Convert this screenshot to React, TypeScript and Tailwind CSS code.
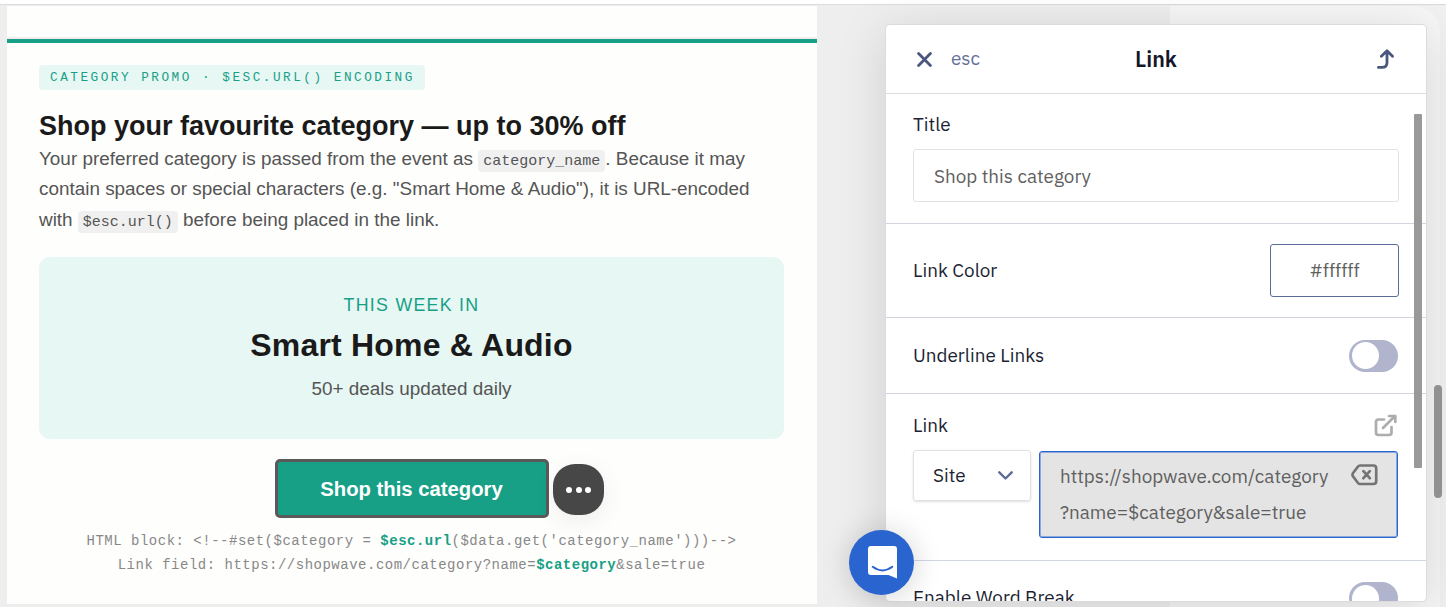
import { useState } from 'react';
import type { ReactNode } from 'react';

const Toggle = ({ label }: { label: string }) => {
  const [on, setOn] = useState(false);

  return (
    <button
      aria-label={label}
      onClick={() => setOn(!on)}
      className={`flex h-8 w-[49px] shrink-0 items-center rounded-full px-[3px] ${on ? 'justify-end bg-[#2a65cf]' : 'bg-[#b0b4cc]'}`}
    >
      <span className="size-[27px] rounded-full bg-white" />
    </button>
  );
};

const Code = ({ children }: { children: ReactNode }) => (
  <code className="rounded bg-[#f0f0f0] px-[5px] pb-0.5 pt-[3px] font-['Liberation_Mono',monospace] text-[15px] leading-none">
    {children}
  </code>
);

const Accent = ({ children }: { children: ReactNode }) => (
  <span className="font-bold text-[#17a086]">{children}</span>
);

const EmailPreview = () => (
  <div className="flex w-[810px] shrink-0 flex-col font-['Liberation_Sans',Arial,sans-serif]">
    <div className="mb-0.5 h-[31px] bg-[#fefefd]" />
    <div className="flex h-[565px] flex-col items-start border-t-4 border-[#17a086] bg-[#fefefd] px-8 pt-[22px]">
      <div className="flex h-[25px] items-center whitespace-nowrap rounded bg-[#e7f7f4] pl-[11px] pr-[10px] pt-px font-['Liberation_Mono',monospace] text-[12.7px] leading-none tracking-[2.52px] text-[#17a086]">
        CATEGORY PROMO · $ESC.URL() ENCODING
      </div>
      <h1 className="mt-[19px] text-[27px] font-bold leading-[34px] text-[#1a1a1a]">
        Shop your favourite category — up to 30% off
      </h1>
      <p className="mt-px text-[18.9px] leading-[30.4px] text-[#555]">
        Your preferred category is passed from the event as <Code>category_name</Code>. Because it may
        <br />
        contain spaces or special characters (e.g. "Smart Home &amp; Audio"), it is URL-encoded
        <br />
        with <Code>$esc.url()</Code> before being placed in the link.
      </p>

      {/* Category highlight */}
      <div className="mt-[22px] h-[182px] w-[745px] rounded-[11px] bg-[#e7f7f4] pt-[35px] text-center">
        <div className="text-[17.8px] leading-[26px] tracking-[1.27px] text-[#17a086]">THIS WEEK IN</div>
        <div className="mt-[7px] text-[32px] font-bold leading-10 tracking-[0.2px] text-[#1a1a1a]">
          Smart Home &amp; Audio
        </div>
        <div className="mt-[10px] text-[18.9px] leading-7 text-[#555]">50+ deals updated daily</div>
      </div>

      {/* Selected button with its context menu trigger */}
      <div className="relative mt-5 flex w-[745px] justify-center">
        <button className="h-[59px] w-[274px] rounded-[5px] border-[3px] border-[#5a5a5a] bg-[#17a086] text-[20.3px] font-bold text-white">
          Shop this category
        </button>
        <button
          aria-label="More"
          className="absolute left-[514px] top-[5px] flex size-[51px] items-center justify-center gap-[3.5px] rounded-[22px] bg-[#474747] shadow-[0_6px_24px_rgba(0,0,0,0.07)]"
        >
          <span className="size-[6px] rounded-full bg-white" />
          <span className="size-[6px] rounded-full bg-white" />
          <span className="size-[6px] rounded-full bg-white" />
        </button>
      </div>

      <div className="mt-[11px] w-[745px] text-center font-['Liberation_Mono',monospace] text-[13.97px] leading-6 tracking-[0.52px] text-[#888]">
        <div>
          HTML block: &lt;!--#set($category = <Accent>$esc.url</Accent>($data.get('category_name')))--&gt;
        </div>
        <div>
          Link field: https://shopwave.com/category?name=<Accent>$category</Accent>&amp;sale=true
        </div>
      </div>
    </div>
  </div>
);

const LinkPanel = () => {
  const [title, setTitle] = useState('Shop this category');

  return (
    <div className="relative ml-[68px] mt-[18px] flex h-[578px] w-[542px] shrink-0 flex-col overflow-hidden rounded-[5px] border border-[#dcdcdc] bg-white font-['IBM_Plex_Sans',Roboto,sans-serif] text-[18.9px] text-[#1c1f33] shadow-[0_8px_50px_rgba(0,0,0,0.13)]">
      {/* Header */}
      <div className="grid h-[69px] shrink-0 grid-cols-3 items-center border-b border-[#dcdcdc] pl-[31px] pr-8">
        <div className="flex items-center gap-[19px] text-[#66719b]">
          <svg className="mt-0.5" width="15" height="15" viewBox="0 0 15 15" fill="none" stroke="#4a567d" strokeWidth="2.8" strokeLinecap="round">
            <path d="M1.6 1.6 13.4 13.4M13.4 1.6 1.6 13.4" />
          </svg>
          <span className="pb-0.5">esc</span>
        </div>
        <h2 className="pl-px text-center text-[21.5px] font-semibold text-[#14172a]">Link</h2>
        <svg className="justify-self-end" width="17" height="20" viewBox="0 0 17 20" fill="none" stroke="#4a567d" strokeWidth="2.8" strokeLinecap="round" strokeLinejoin="round">
          <path d="M1.4 18.4H5Q10 18.4 10 13.5V2.2M4.4 7.2 10 1.8 15.5 7.2" />
        </svg>
      </div>

      {/* Title */}
      <div className="h-[130px] shrink-0 border-b border-[#d2d3df] px-[27px] pt-4">
        <label className="block leading-7">Title</label>
        <input
          value={title}
          onChange={(e) => setTitle(e.target.value)}
          className="mt-[11px] h-[53px] w-full rounded-[3px] border border-[#e3e3e6] px-5 text-[#5f5f5f] outline-none"
        />
      </div>

      {/* Link color */}
      <div className="flex h-[94px] shrink-0 items-center justify-between border-b border-[#d2d3df] px-[27px]">
        <span>Link Color</span>
        <div className="flex h-[53px] w-[129px] items-center justify-center rounded-[3px] border border-[#5c6b98] text-[#5f5f5f]">
          #ffffff
        </div>
      </div>

      <div className="flex h-[76px] shrink-0 items-center justify-between border-b border-[#d2d3df] pl-[27px] pr-7">
        <span>Underline Links</span>
        <Toggle label="Underline Links" />
      </div>

      {/* Link target */}
      <div className="h-[167px] shrink-0 border-b border-[#d2d7e6] pl-[27px] pr-7 pt-[17px]">
        <div className="flex h-7 items-center justify-between">
          <span>Link</span>
          <svg className="mr-px" width="23" height="23" viewBox="0 0 23 23" fill="none" stroke="#adadad" strokeWidth="2.7" strokeLinecap="round" strokeLinejoin="round">
            <path d="M10 5.5H4.5Q2 5.5 2 8V18.5Q2 21 4.5 21H15Q17.5 21 17.5 18.5V13M9 14 21 2M15 2H21.3V8" />
          </svg>
        </div>
        <div className="mt-[11px] flex items-start gap-2">
          <div className="flex h-[51px] w-[118px] items-center justify-between rounded-[3px] border border-[#e2e2e5] pl-[19px] pr-[17px] shadow-sm">
            Site
            <svg width="15" height="9" viewBox="0 0 15 9" fill="none" stroke="#5c6b98" strokeWidth="2.4" strokeLinecap="round" strokeLinejoin="round">
              <path d="M1.3 1.3 7.5 7.5 13.7 1.3" />
            </svg>
          </div>
          <div className="mt-px flex h-[87px] w-[359px] items-start justify-between rounded-[3px] border border-[#2a65cf] bg-[#e4e4e4] pl-5 pr-[19px] pt-[6px] leading-9 text-[#5f5f5f] shadow-[inset_0_0_0_1px_#8fa8dc]">
            <div>
              https://shopwave.com/category
              <br />
              ?name=$category&amp;sale=true
            </div>
            <svg className="mt-[6px]" width="27" height="22" viewBox="0 0 27 22" fill="none" stroke="#747474" strokeWidth="2.7" strokeLinecap="round" strokeLinejoin="round">
              <path d="M9 1.5H22.5Q25.2 1.5 25.2 4.5V17Q25.2 20 22.5 20H9Q7.8 20 7 19L1.9 12.3Q1.1 10.8 1.9 9.3L7 2.5Q7.8 1.5 9 1.5ZM12.4 7.2 18.8 14.2M18.8 7.2 12.4 14.2" />
            </svg>
          </div>
        </div>
      </div>

      <div className="flex h-[74px] shrink-0 items-center justify-between pl-[27px] pr-7">
        <span className="pb-px">Enable Word Break</span>
        <Toggle label="Enable Word Break" />
      </div>

      {/* Scrollbar thumb */}
      <div className="absolute right-1 top-[89px] h-[354px] w-2 rounded-[1px] bg-[#999]" />
    </div>
  );
};

const ChatLauncher = () => (
  <button
    aria-label="Open chat"
    className="absolute left-[849px] top-[530px] flex size-[65px] items-center justify-center rounded-full bg-[#2a65cf] pl-px shadow-[0_2px_30px_rgba(0,0,0,0.18)]"
  >
    <svg width="29" height="33" viewBox="0 0 29 33">
      <path d="M3 0H26Q29 0 29 3V32.5L20.5 29H3Q0 29 0 26V3Q0 0 3 0Z" fill="#fff" />
      <path d="M4.7 20.8Q14.5 28 24.3 20.8" fill="none" stroke="#2a65cf" strokeWidth="2" strokeLinecap="round" />
    </svg>
  </button>
);

const App = () => (
  <div className="relative flex h-[607px] w-[1446px] flex-col overflow-hidden bg-white">
    <div className="h-[5px] shrink-0 border-b border-[#dbdbdb] bg-white" />
    <div className="flex h-[602px] bg-[#eeeeee] pl-[7px] pt-px">
      <EmailPreview />
      <div className="relative flex flex-1">
        {/* Lighter canvas behind the settings panel */}
        <div className="absolute inset-y-0 left-[353px] right-0 bg-[#f1f1f1]" />
        <div className="absolute bottom-0 left-[353px] right-[6px] top-0 rounded-tr-[26px] bg-[#f6f6f6]" />
        <LinkPanel />
        <div className="absolute right-1 top-[379px] h-[113px] w-2 rounded-full bg-[#919191]" />
      </div>
    </div>
    <ChatLauncher />
  </div>
);

export default App;
